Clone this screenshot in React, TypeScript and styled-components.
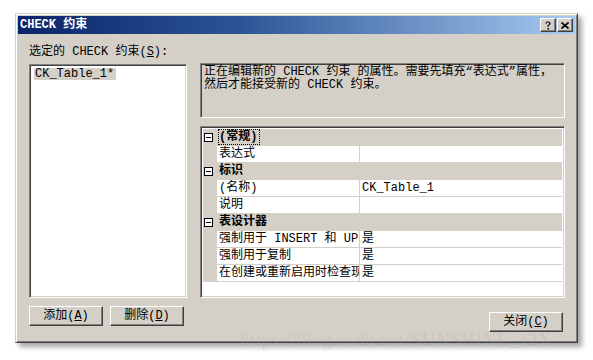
import styled, { createGlobalStyle } from "styled-components";

const GlobalStyle = createGlobalStyle`
  html, body {
    margin: 0;
    padding: 0;
    background: #ffffff;
  }
  body {
    font-family: "Liberation Mono", "Noto Sans CJK SC", monospace;
    font-size: 12px;
    color: #000;
  }
`;

const Page = styled.div`
  position: relative;
  width: 593px;
  height: 360px;
  padding: 13px 0 0 15px;
  box-sizing: border-box;
`;

const Window = styled.div`
  width: 563px;
  height: 330px;
  box-sizing: border-box;
  background: #d4d0c8;
  border: 1px solid;
  border-color: #d4d0c8 #404040 #404040 #d4d0c8;
  box-shadow: inset 1px 1px #ffffff, inset -1px -1px #808080,
    4px 4px 5px rgba(0, 0, 0, 0.35);
  padding: 2px;
  display: flex;
  flex-direction: column;
`;

const TitleBar = styled.div`
  height: 18px;
  display: flex;
  align-items: center;
  padding: 0 2px;
  background: linear-gradient(to right, #0a246a 0%, #2c5596 40%, #a6caf0 100%);
`;

const TitleText = styled.div`
  flex: 1;
  color: #fff;
  font-weight: bold;
  font-size: 12px;
  line-height: 18px;
`;

const CaptionButton = styled.div<{ $gap?: number }>`
  width: 14px;
  height: 12px;
  margin-left: ${(p) => p.$gap ?? 0}px;
  background: #d4d0c8;
  border: 1px solid;
  border-color: #ffffff #404040 #404040 #ffffff;
  box-shadow: inset -1px -1px #808080;
  display: flex;
  align-items: center;
  justify-content: center;
`;

const Body = styled.div`
  display: flex;
  gap: 13px;
  padding: 0 10px 0 11px;
`;

const LeftColumn = styled.div`
  width: 158px;
  display: flex;
  flex-direction: column;
  padding-top: 12px;
`;

const FieldLabel = styled.div`
  line-height: 13px;
  height: 13px;
  margin-bottom: 5px;
`;

const Sunken = styled.div`
  box-sizing: border-box;
  border: 1px solid;
  border-color: #808080 #ffffff #ffffff #808080;
  box-shadow: inset 1px 1px #404040, inset -1px -1px #d4d0c8;
`;

const ListBox = styled(Sunken)`
  height: 234px;
  background: #fff;
  padding: 2px 4px;
`;

const ListItem = styled.div<{ $selected?: boolean }>`
  display: inline-block;
  line-height: 12px;
  padding: 0 2px 0 1px;
  background: ${(p) => (p.$selected ? "#d4d0c8" : "transparent")};
`;

const RightColumn = styled.div`
  width: 365px;
  display: flex;
  flex-direction: column;
  padding-top: 29px;
  gap: 8px;
`;

const InfoBox = styled(Sunken)`
  height: 55px;
  padding: 2px 3px;
  line-height: 13px;
  white-space: nowrap;
  overflow: hidden;
`;

const PropertyGrid = styled(Sunken)`
  height: 172px;
  background: #fff;
  padding: 2px;
  overflow: hidden;
`;

const Row = styled.div<{ $category?: boolean }>`
  display: flex;
  height: 16px;
  border-bottom: 1px solid #d4d0c8;
  background: ${(p) => (p.$category ? "#d4d0c8" : "#fff")};
  font-weight: ${(p) => (p.$category ? "bold" : "normal")};
  line-height: 16px;
`;

const Gutter = styled.div`
  width: 14px;
  flex-shrink: 0;
  background: #d4d0c8;
  display: flex;
  align-items: center;
`;

const ExpandBox = styled.div`
  width: 7px;
  height: 7px;
  border: 1px solid #000;
  background: #fff;
  margin-left: 1px;
  position: relative;
  &::after {
    content: "";
    position: absolute;
    left: 1px;
    right: 1px;
    top: 3px;
    height: 1px;
    background: #000;
  }
`;

const NameCell = styled.div`
  width: 143px;
  flex-shrink: 0;
  padding-left: 2px;
  box-sizing: border-box;
  border-right: 1px solid #d4d0c8;
  white-space: nowrap;
  overflow: hidden;
  text-overflow: clip;
`;

const ValueCell = styled.div`
  flex: 1;
  padding-left: 2px;
  white-space: nowrap;
  overflow: hidden;
`;

const CategoryLabel = styled.div<{ $focused?: boolean }>`
  margin-left: 2px;
  padding: 0 2px 0 0;
  line-height: 14px;
  align-self: center;
  outline: ${(p) => (p.$focused ? "1px dotted #000" : "none")};
`;

const Footer = styled.div`
  display: flex;
  align-items: flex-start;
  padding: 8px 12px 0 11px;
  gap: 7px;
`;

const PushButton = styled.div<{ $push?: boolean; $drop?: number }>`
  width: 74px;
  height: 20px;
  box-sizing: border-box;
  margin-left: ${(p) => (p.$push ? "auto" : "0")};
  margin-top: ${(p) => p.$drop ?? 0}px;
  border: 1px solid;
  border-color: #ffffff #404040 #404040 #ffffff;
  box-shadow: inset -1px -1px #808080;
  display: flex;
  align-items: center;
  justify-content: center;
  line-height: 12px;
  & u {
    text-underline-offset: 1px;
  }
`;

const Watermark = styled.div`
  position: absolute;
  left: 240px;
  top: 331px;
  height: 17px;
  line-height: 17px;
  font-family: "Liberation Serif", serif;
  font-size: 19px;
  color: rgba(160, 160, 160, 0.22);
  letter-spacing: 0.5px;
  white-space: nowrap;
  pointer-events: none;
`;

type GridRow =
  | { kind: "category"; label: string; focused?: boolean }
  | { kind: "property"; name: string; value: string };

const rows: GridRow[] = [
  { kind: "category", label: "(常规)", focused: true },
  { kind: "property", name: "表达式", value: "" },
  { kind: "category", label: "标识" },
  { kind: "property", name: "(名称)", value: "CK_Table_1" },
  { kind: "property", name: "说明", value: "" },
  { kind: "category", label: "表设计器" },
  { kind: "property", name: "强制用于 INSERT 和 UPDATE", value: "是" },
  { kind: "property", name: "强制用于复制", value: "是" },
  { kind: "property", name: "在创建或重新启用时检查现有数据", value: "是" },
];

function HelpIcon() {
  return (
    <svg width="8" height="9" viewBox="0 0 8 9">
      <path
        d="M1.5 2.5 V1.5 H2.5 V0.5 H5.5 V1.5 H6.5 V3.5 H5.5 V4.5 H4.5 V6 H3.5 V4 H4.5 V3 H5 V1.5 H3 V2.5 Z"
        fill="#000"
      />
      <rect x="3.5" y="7" width="1.5" height="1.5" fill="#000" />
    </svg>
  );
}

function CloseIcon() {
  return (
    <svg width="8" height="7" viewBox="0 0 8 7">
      <path d="M0.5 0.5 L7.5 6.5 M7.5 0.5 L0.5 6.5" stroke="#000" strokeWidth="1.6" />
    </svg>
  );
}

export default function App() {
  return (
    <>
      <GlobalStyle />
      <Page>
        <Window>
          <TitleBar>
            <TitleText>CHECK 约束</TitleText>
            <CaptionButton>
              <HelpIcon />
            </CaptionButton>
            <CaptionButton $gap={1}>
              <CloseIcon />
            </CaptionButton>
          </TitleBar>

          <Body>
            <LeftColumn>
              <FieldLabel>
                选定的 CHECK 约束(<u>S</u>):
              </FieldLabel>
              <ListBox>
                <ListItem $selected>CK_Table_1*</ListItem>
              </ListBox>
            </LeftColumn>

            <RightColumn>
              <InfoBox>
                正在编辑新的 CHECK 约束 的属性。需要先填充“表达式”属性，
                <br />
                然后才能接受新的 CHECK 约束。
              </InfoBox>
              <PropertyGrid>
                {rows.map((row, i) =>
                  row.kind === "category" ? (
                    <Row key={i} $category>
                      <Gutter>
                        <ExpandBox />
                      </Gutter>
                      <CategoryLabel $focused={row.focused}>{row.label}</CategoryLabel>
                    </Row>
                  ) : (
                    <Row key={i}>
                      <Gutter />
                      <NameCell>{row.name}</NameCell>
                      <ValueCell>{row.value}</ValueCell>
                    </Row>
                  )
                )}
              </PropertyGrid>
            </RightColumn>
          </Body>

          <Footer>
            <PushButton>
              添加(<u>A</u>)
            </PushButton>
            <PushButton>
              删除(<u>D</u>)
            </PushButton>
            <PushButton $push $drop={6}>
              关闭(<u>C</u>)
            </PushButton>
          </Footer>
        </Window>
        <Watermark>https://blog.csdn.net/SUNSHINE_12X</Watermark>
      </Page>
    </>
  );
}
